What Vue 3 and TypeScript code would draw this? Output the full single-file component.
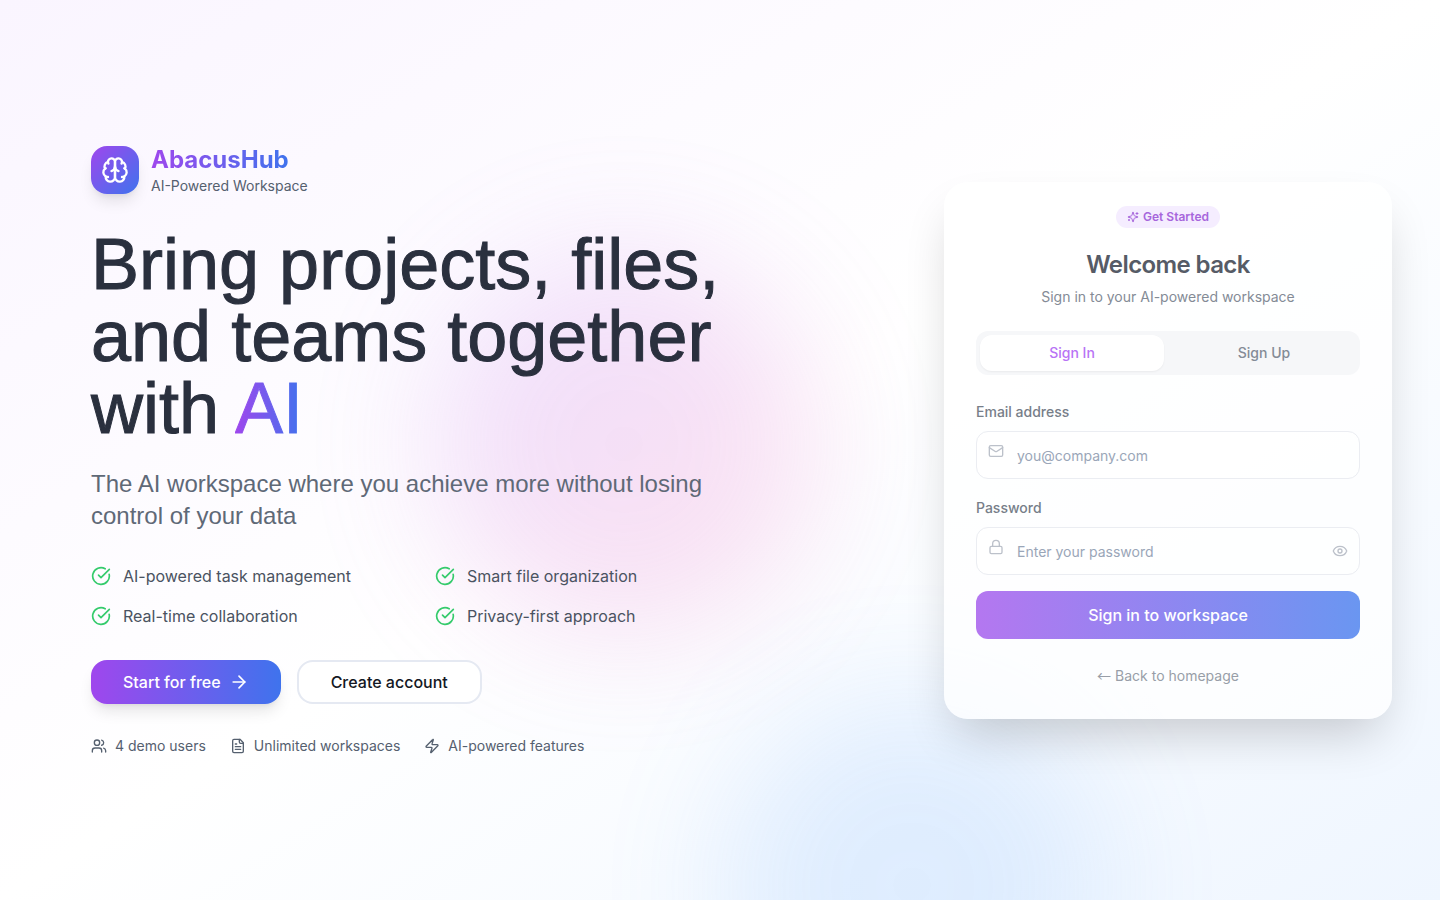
<script setup lang="ts">
import { ref } from 'vue'

const features: string[] = [
  'AI-powered task management',
  'Smart file organization',
  'Real-time collaboration',
  'Privacy-first approach',
]

const mode = ref<'in' | 'up'>('in')
const email = ref('')
const password = ref('')
const showPassword = ref(false)
</script>

<template>
  <main class="page">
    <div class="blob blob-purple"></div>
    <div class="blob blob-blue"></div>

    <section class="hero">
      <div class="hero-content">
        <div class="brand">
          <div class="brand-mark">
            <svg class="icon icon-brain" viewBox="0 0 24 24">
              <path d="M12 5a3 3 0 1 0-5.997.125 4 4 0 0 0-2.526 5.77 4 4 0 0 0 .556 6.588A4 4 0 1 0 12 18Z" />
              <path d="M12 5a3 3 0 1 1 5.997.125 4 4 0 0 1 2.526 5.77 4 4 0 0 1-.556 6.588A4 4 0 1 1 12 18Z" />
              <path d="M15 13a4.5 4.5 0 0 1-3-4 4.5 4.5 0 0 1-3 4" />
              <path d="M17.599 6.5a3 3 0 0 0 .399-1.375" />
              <path d="M6.003 5.125A3 3 0 0 0 6.401 6.5" />
              <path d="M3.477 10.896a4 4 0 0 1 .585-.396" />
              <path d="M19.938 10.5a4 4 0 0 1 .585.396" />
              <path d="M6 18a4 4 0 0 1-1.967-.516" />
              <path d="M19.967 17.484A4 4 0 0 1 18 18" />
            </svg>
          </div>
          <div>
            <div class="brand-name">AbacusHub</div>
            <div class="brand-tag">AI-Powered Workspace</div>
          </div>
        </div>

        <h1>Bring projects, files, and teams together with <span class="accent">AI</span></h1>
        <p class="lead">The AI workspace where you achieve more without losing control of your data</p>

        <ul class="features">
          <li v-for="feature in features" :key="feature">
            <svg class="icon icon-check" viewBox="0 0 24 24">
              <path d="M21.801 10A10 10 0 1 1 17 3.335" />
              <path d="m9 11 3 3L22 4" />
            </svg>
            {{ feature }}
          </li>
        </ul>

        <div class="actions">
          <button type="button" class="btn btn-primary">
            Start for free
            <svg class="icon icon-arrow" viewBox="0 0 24 24">
              <path d="M5 12h14" />
              <path d="m12 5 7 7-7 7" />
            </svg>
          </button>
          <button type="button" class="btn btn-outline">Create account</button>
        </div>

        <div class="stats">
          <span>
            <svg class="icon icon-small" viewBox="0 0 24 24">
              <path d="M16 21v-2a4 4 0 0 0-4-4H6a4 4 0 0 0-4 4v2" />
              <circle cx="9" cy="7" r="4" />
              <path d="M22 21v-2a4 4 0 0 0-3-3.87" />
              <path d="M16 3.13a4 4 0 0 1 0 7.75" />
            </svg>
            4 demo users
          </span>
          <span>
            <svg class="icon icon-small" viewBox="0 0 24 24">
              <path d="M15 2H6a2 2 0 0 0-2 2v16a2 2 0 0 0 2 2h12a2 2 0 0 0 2-2V7Z" />
              <path d="M14 2v4a2 2 0 0 0 2 2h4" />
              <path d="M10 9H8" />
              <path d="M16 13H8" />
              <path d="M16 17H8" />
            </svg>
            Unlimited workspaces
          </span>
          <span>
            <svg class="icon icon-small" viewBox="0 0 24 24">
              <path d="M4 14a1 1 0 0 1-.78-1.63l9.9-10.2a.5.5 0 0 1 .86.46l-1.92 6.02A1 1 0 0 0 13 10h7a1 1 0 0 1 .78 1.63l-9.9 10.2a.5.5 0 0 1-.86-.46l1.92-6.02A1 1 0 0 0 11 14z" />
            </svg>
            AI-powered features
          </span>
        </div>
      </div>
    </section>

    <section class="card">
      <div class="badge">
        <svg class="icon icon-spark" viewBox="0 0 24 24">
          <path d="M9.937 15.5A2 2 0 0 0 8.5 14.063l-6.135-1.582a.5.5 0 0 1 0-.962L8.5 9.936A2 2 0 0 0 9.937 8.5l1.582-6.135a.5.5 0 0 1 .963 0L14.063 8.5A2 2 0 0 0 15.5 9.937l6.135 1.581a.5.5 0 0 1 0 .964L15.5 14.063a2 2 0 0 0-1.437 1.437l-1.582 6.135a.5.5 0 0 1-.963 0z" />
          <path d="M20 3v4" />
          <path d="M22 5h-4" />
          <path d="M4 17v2" />
          <path d="M5 18H3" />
        </svg>
        Get Started
      </div>
      <h2>Welcome back</h2>
      <p class="card-sub">Sign in to your AI-powered workspace</p>

      <div class="tabs">
        <button type="button" :class="{ active: mode === 'in' }" @click="mode = 'in'">Sign In</button>
        <button type="button" :class="{ active: mode === 'up' }" @click="mode = 'up'">Sign Up</button>
      </div>

      <form @submit.prevent>
        <label for="email">Email address</label>
        <div class="field">
          <svg class="icon icon-lead" viewBox="0 0 24 24">
            <rect x="2" y="4" width="20" height="16" rx="2" />
            <path d="m22 7-8.97 5.7a1.94 1.94 0 0 1-2.06 0L2 7" />
          </svg>
          <input id="email" v-model="email" type="email" placeholder="you@company.com" />
        </div>

        <label for="password">Password</label>
        <div class="field">
          <svg class="icon icon-lead" viewBox="0 0 24 24">
            <rect x="3" y="11" width="18" height="11" rx="2" />
            <path d="M7 11V7a5 5 0 0 1 10 0v4" />
          </svg>
          <input
            id="password"
            v-model="password"
            :type="showPassword ? 'text' : 'password'"
            placeholder="Enter your password"
          />
          <button type="button" class="reveal" aria-label="Show password" @click="showPassword = !showPassword">
            <svg class="icon icon-small" viewBox="0 0 24 24">
              <path d="M2.062 12.348a1 1 0 0 1 0-.696 10.75 10.75 0 0 1 19.876 0 1 1 0 0 1 0 .696 10.75 10.75 0 0 1-19.876 0" />
              <circle cx="12" cy="12" r="3" />
            </svg>
          </button>
        </div>

        <button type="submit" class="submit">Sign in to workspace</button>
      </form>

      <a href="#" class="back"><span class="back-arrow">←</span> Back to homepage</a>
    </section>
  </main>
</template>

<style>
body {
  margin: 0;
}
</style>

<style scoped>
.page,
.page * {
  box-sizing: border-box;
}

.page {
  position: relative;
  display: flex;
  align-items: center;
  gap: 90px;
  min-height: 100vh;
  padding: 48px 48px 48px 0;
  overflow: hidden;
  background: linear-gradient(to bottom right, #faf5ff, #ffffff 50%, #eff6ff);
  font-family: Inter, "Liberation Sans", sans-serif;
  font-size: 14px;
  line-height: 20px;
}

.blob {
  position: absolute;
  width: 384px;
  height: 384px;
  border-radius: 50%;
  filter: blur(64px);
}

.blob-purple {
  top: 28%;
  left: 30%;
  background: linear-gradient(to bottom right, #b57bfa, #f472b6);
  opacity: 0.22;
}

.blob-blue {
  top: 77%;
  left: 50%;
  background: #60a5fa;
  opacity: 0.15;
}

.icon {
  flex: none;
  fill: none;
  stroke: currentColor;
  stroke-width: 2;
  stroke-linecap: round;
  stroke-linejoin: round;
}

.icon-small {
  width: 16px;
  height: 16px;
}

.hero {
  position: relative;
  flex: 1;
  padding-left: 91px;
}

.hero-content {
  max-width: 672px;
}

.brand {
  display: flex;
  align-items: center;
  gap: 12px;
  margin-bottom: 32px;
}

.brand-mark {
  display: flex;
  align-items: center;
  justify-content: center;
  width: 48px;
  height: 48px;
  border-radius: 16px;
  background: linear-gradient(to bottom right, #9f47ed, #3f73ed);
  box-shadow: 0 10px 15px -3px rgba(0, 0, 0, 0.1), 0 4px 6px -4px rgba(0, 0, 0, 0.1);
  color: #ffffff;
}

.icon-brain {
  width: 28px;
  height: 28px;
}

.brand-name {
  width: fit-content;
  background: linear-gradient(to right, #9f47ed, #3f73ed);
  background-clip: text;
  color: transparent;
  font-size: 24px;
  font-weight: 700;
  line-height: 32px;
}

.brand-tag {
  color: #55606f;
}

h1 {
  margin: 0 0 24px;
  color: #2a303e;
  font-family: "Liberation Sans", sans-serif;
  font-size: 72px;
  font-weight: 400;
  line-height: 72px;
  -webkit-text-stroke: 1px #2a303e;
}

.accent {
  background: linear-gradient(to right, #9f47ed, #3f73ed);
  background-clip: text;
  color: transparent;
  -webkit-text-stroke: 1px transparent;
}

.lead {
  margin: 0 0 32px;
  color: #5f6977;
  font-family: "Liberation Sans", sans-serif;
  font-size: 24px;
  line-height: 32px;
}

.features {
  display: grid;
  grid-template-columns: 1fr 1fr;
  gap: 16px;
  margin: 0 0 32px;
  padding: 0;
  list-style: none;
  color: #4a5361;
  font-size: 16px;
  line-height: 24px;
}

.features li {
  display: flex;
  align-items: center;
  gap: 12px;
}

.icon-check {
  width: 20px;
  height: 20px;
  color: #35cb6c;
}

.actions {
  display: flex;
  gap: 16px;
  margin-bottom: 32px;
}

button {
  border: 0;
  font: inherit;
  cursor: pointer;
}

.btn {
  display: flex;
  align-items: center;
  gap: 8px;
  height: 44px;
  padding: 0 32px;
  border-radius: 16px;
  font-size: 16px;
  font-weight: 500;
  line-height: 24px;
}

.btn-primary {
  background: linear-gradient(to right, #9f47ed, #3f73ed);
  box-shadow: 0 10px 15px -3px rgba(0, 0, 0, 0.1), 0 4px 6px -4px rgba(0, 0, 0, 0.1);
  color: #ffffff;
}

.icon-arrow {
  width: 20px;
  height: 20px;
}

.btn-outline {
  border: 2px solid #e5e9f2;
  background: #ffffff;
  color: #141824;
}

.stats {
  display: flex;
  gap: 24px;
  color: #55606f;
}

.stats span {
  display: flex;
  align-items: center;
  gap: 8px;
}

.card {
  position: relative;
  display: flex;
  flex: 0 0 448px;
  flex-direction: column;
  align-items: center;
  padding: 24px 32px 32px;
  border-radius: 24px;
  background: rgba(255, 255, 255, 0.75);
  box-shadow: 0 25px 50px -12px rgba(0, 0, 0, 0.2);
}

.badge {
  display: flex;
  align-items: center;
  gap: 4px;
  margin-bottom: 21px;
  padding: 3px 11px;
  border-radius: 11px;
  background: #f5edff;
  color: #a766dc;
  font-size: 12px;
  font-weight: 600;
  line-height: 16px;
}

.icon-spark {
  width: 12px;
  height: 12px;
}

h2 {
  margin: 0 0 6px;
  color: #565b66;
  font-size: 24px;
  font-weight: 600;
  letter-spacing: -0.025em;
  line-height: 32px;
}

.card-sub {
  margin: 0 0 24px;
  color: #848b96;
}

.tabs {
  display: grid;
  grid-template-columns: 1fr 1fr;
  gap: 8px;
  width: 100%;
  margin-bottom: 24px;
  padding: 4px;
  border-radius: 12px;
  background: #f6f7f9;
}

.tabs button {
  height: 36px;
  border-radius: 12px;
  background: transparent;
  color: #848b96;
  font-weight: 500;
}

.tabs .active {
  background: #ffffff;
  box-shadow: 0 1px 2px rgba(0, 0, 0, 0.05);
  color: #b873f5;
}

form {
  width: 100%;
}

label {
  display: block;
  width: fit-content;
  margin: 0 0 8px;
  padding-top: 2px;
  color: #777e89;
  font-weight: 500;
  line-height: 22px;
}

.field {
  position: relative;
  margin-bottom: 16px;
}

.field input {
  display: block;
  width: 100%;
  height: 48px;
  padding: 2px 40px 0;
  border: 1px solid #ebedf2;
  border-radius: 12px;
  outline: 0;
  background: rgba(255, 255, 255, 0.5);
  color: #565b66;
  font: inherit;
}

.field input::placeholder {
  color: #9aa6b8;
  opacity: 1;
}

.icon-lead {
  position: absolute;
  top: 12px;
  left: 12px;
  width: 16px;
  height: 16px;
  color: #bcc1ca;
}

.reveal {
  position: absolute;
  top: 16px;
  right: 12px;
  width: 16px;
  height: 16px;
  padding: 0;
  background: transparent;
  color: #bcc1ca;
}

.reveal .icon {
  display: block;
}

.submit {
  width: 100%;
  height: 48px;
  border-radius: 12px;
  background: linear-gradient(to right, #b477f0, #6a96f1);
  color: #ffffff;
  font-size: 16px;
  font-weight: 500;
}

.back {
  margin-top: 26px;
  color: #989ea8;
  line-height: 22px;
  text-decoration: none;
}

.back-arrow {
  font-family: "Noto Sans CJK JP", sans-serif;
  line-height: 1;
}
</style>
